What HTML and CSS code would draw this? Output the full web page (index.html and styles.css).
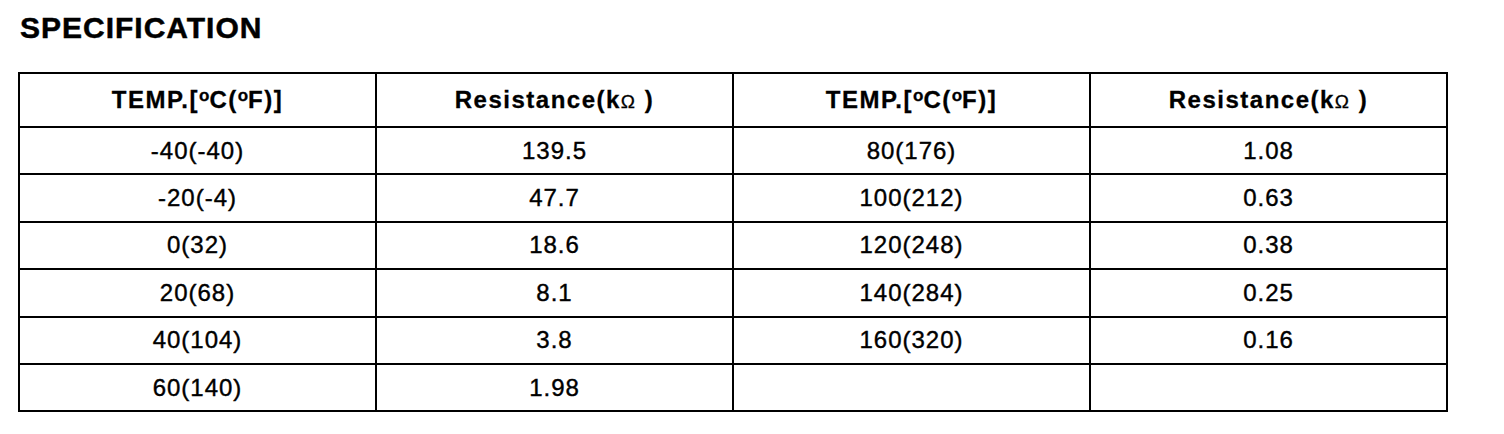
FILE: index.html
```html
<!DOCTYPE html>
<html lang="en">

<head>
    <meta charset="UTF-8">
    <meta name="viewport" content="width=device-width, initial-scale=1.0">
    <title>Specification</title>
    <link rel="stylesheet" href="styles.css">
</head>

<body>
    <div class="page">
        <h1 class="title">SPECIFICATION</h1>

        <table class="spec-table">
            <colgroup>
                <col class="col">
                <col class="col">
                <col class="col">
                <col class="col">
            </colgroup>
            <thead>
                <tr>
                    <th>TEMP.[<sup>o</sup>C(<sup>o</sup>F)]</th>
                    <th>Resistance(k<span class="ohm">Ω</span> )</th>
                    <th>TEMP.[<sup>o</sup>C(<sup>o</sup>F)]</th>
                    <th>Resistance(k<span class="ohm">Ω</span> )</th>
                </tr>
            </thead>
            <tbody>
                <tr>
                    <td>-40(-40)</td>
                    <td>139.5</td>
                    <td>80(176)</td>
                    <td>1.08</td>
                </tr>
                <tr>
                    <td>-20(-4)</td>
                    <td>47.7</td>
                    <td>100(212)</td>
                    <td>0.63</td>
                </tr>
                <tr>
                    <td>0(32)</td>
                    <td>18.6</td>
                    <td>120(248)</td>
                    <td>0.38</td>
                </tr>
                <tr>
                    <td>20(68)</td>
                    <td>8.1</td>
                    <td>140(284)</td>
                    <td>0.25</td>
                </tr>
                <tr>
                    <td>40(104)</td>
                    <td>3.8</td>
                    <td>160(320)</td>
                    <td>0.16</td>
                </tr>
                <tr>
                    <td>60(140)</td>
                    <td>1.98</td>
                    <td></td>
                    <td></td>
                </tr>
            </tbody>
        </table>
    </div>
</body>

</html>
```

FILE: styles.css
```css
body {
    margin: 0;
    padding: 0;
    background-color: #fff;
    color: #000;
    font-family: "Liberation Sans", Arial, sans-serif;
}

.page {
    padding: 11px 0 0 18px;
}

.title {
    margin: 0 0 27px 2px;
    font-size: 30px;
    line-height: 34px;
    font-weight: bold;
    letter-spacing: 1px;
    -webkit-text-stroke: 0.5px #000;
}

.spec-table {
    border-collapse: collapse;
    table-layout: fixed;
    width: 1430px;
    border: 2px solid #000;
}

.col {
    width: 25%;
}

.spec-table th,
.spec-table td {
    border: 2px solid #000;
    padding: 0;
    text-align: center;
    vertical-align: middle;
    font-size: 24px;
    letter-spacing: 1px;
    -webkit-text-stroke: 0.4px #000;
}

.spec-table th {
    height: 52px;
    font-weight: bold;
    letter-spacing: 1.5px;
    -webkit-text-stroke: 0.3px #000;
}

.spec-table td {
    height: 45.4px;
}

.spec-table sup {
    font-size: 17px;
    vertical-align: 7.5px;
    line-height: 0;
    letter-spacing: 0;
}

.ohm {
    font-weight: normal;
    font-size: 19px;
}
```
